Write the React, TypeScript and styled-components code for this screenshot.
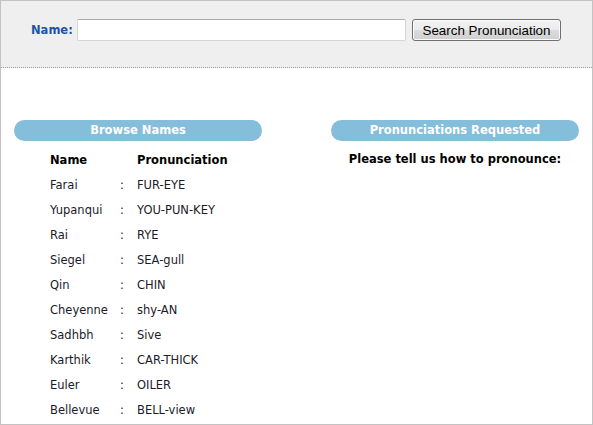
import * as React from "react";
import styled, { createGlobalStyle } from "styled-components";

const GlobalStyle = createGlobalStyle`
    html, body {
        margin: 0;
        padding: 0;
        background: #ffffff;
    }
    body {
        font-family: "DejaVu Sans", Verdana, sans-serif;
        font-size: 11.5px;
        color: #000000;
    }
`;

const Page = styled.div`
    width: 593px;
    height: 425px;
    box-sizing: border-box;
    border: 1px solid #c3c3c3;
    overflow: hidden;
`;

const SearchBar = styled.form`
    height: 67px;
    box-sizing: border-box;
    background: #efefef;
    border-bottom: 1px dotted #9a9a9a;
    padding: 18px 0 0 30px;
    margin: 0;
`;

const SearchRow = styled.div`
    display: flex;
    align-items: center;
    height: 22px;
`;

const Label = styled.label`
    width: 46px;
    font-weight: bold;
    color: #1d55a5;
`;

const NameInput = styled.input`
    width: 329px;
    height: 22px;
    box-sizing: border-box;
    border: 1px solid #d6d6d6;
    border-top-color: #ababab;
    border-radius: 2px;
    background: #ffffff;
    margin: 0 6px 0 0;
    padding: 0 3px;
    font: 12px "Liberation Sans", Arial, sans-serif;
    outline: none;
`;

const SearchButton = styled.button`
    width: 149px;
    height: 22px;
    box-sizing: border-box;
    border: 1px solid #707070;
    border-radius: 3px;
    background: linear-gradient(#f2f2f2 0%, #ebebeb 50%, #dddddd 51%, #cfcfcf 100%);
    box-shadow: inset 0 0 0 1px #fcfcfc;
    font: 13.4px "Liberation Sans", Arial, sans-serif;
    color: #000000;
    padding: 0;
`;

const Columns = styled.div`
    display: flex;
    gap: 69px;
    padding: 52px 0 0 13px;
`;

const Column = styled.section`
    width: 248px;
    display: flex;
    flex-direction: column;
`;

const Pill = styled.h2`
    margin: 0;
    height: 21px;
    line-height: 21px;
    border-radius: 11px;
    background: #84bedb;
    color: #ffffff;
    font-size: 11.5px;
    font-weight: bold;
    text-align: center;
`;

const NameTable = styled.div`
    margin-top: 6px;
    display: grid;
    grid-template-columns: 70px 17px auto;
    padding-left: 36px;
    grid-auto-rows: 25px;
    align-items: center;
`;

const Cell = styled.div<{ $head?: boolean }>`
    font-weight: ${(p) => (p.$head ? "bold" : "normal")};
    color: ${(p) => (p.$head ? "#000000" : "#1a1a2a")};
    white-space: nowrap;
`;

const Prompt = styled.p`
    margin: 6px 0 0;
    height: 25px;
    line-height: 25px;
    text-align: center;
    font-weight: bold;
`;

const names: [string, string][] = [
    ["Farai", "FUR-EYE"],
    ["Yupanqui", "YOU-PUN-KEY"],
    ["Rai", "RYE"],
    ["Siegel", "SEA-gull"],
    ["Qin", "CHIN"],
    ["Cheyenne", "shy-AN"],
    ["Sadhbh", "Sive"],
    ["Karthik", "CAR-THICK"],
    ["Euler", "OILER"],
    ["Bellevue", "BELL-view"],
];

export default function App() {
    return (
        <>
            <GlobalStyle />
            <Page>
                <SearchBar onSubmit={(e) => e.preventDefault()}>
                    <SearchRow>
                        <Label htmlFor="name">Name:</Label>
                        <NameInput id="name" type="text" />
                        <SearchButton type="submit">Search Pronunciation</SearchButton>
                    </SearchRow>
                </SearchBar>
                <Columns>
                    <Column>
                        <Pill>Browse Names</Pill>
                        <NameTable>
                            <Cell $head>Name</Cell>
                            <Cell />
                            <Cell $head>Pronunciation</Cell>
                            {names.map(([name, sound]) => (
                                <React.Fragment key={name}>
                                    <Cell>{name}</Cell>
                                    <Cell>:</Cell>
                                    <Cell>{sound}</Cell>
                                </React.Fragment>
                            ))}
                        </NameTable>
                    </Column>
                    <Column>
                        <Pill>Pronunciations Requested</Pill>
                        <Prompt>Please tell us how to pronounce:</Prompt>
                    </Column>
                </Columns>
            </Page>
        </>
    );
}
